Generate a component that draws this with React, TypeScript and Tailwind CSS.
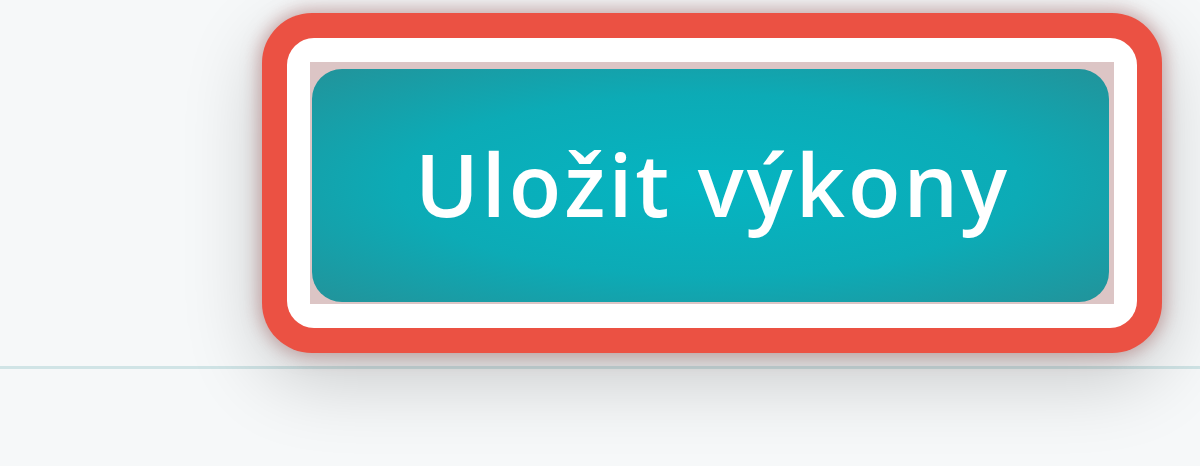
export default function App() {
  return (
    <div className="h-[466px] w-[1200px] overflow-hidden bg-[#f6f8f9] font-['Open_Sans',sans-serif]">
      {/* Toolbar strip with highlighted save button */}
      <div className="h-[369px] border-b-[3px] border-[#d0e4e6] pl-[262px] pt-[13px]">
        <div className="flex h-[340px] w-[900px] rounded-[50px] bg-[#eb5143] p-[25px] shadow-[0_0_16px_4px_rgba(175,120,120,0.55),0_24px_80px_rgba(0,0,0,0.2)]">
          <div className="flex flex-1 rounded-[27px] bg-white px-[23px] py-[24px]">
            <div className="flex flex-1 bg-[#dcc5c5] pb-[2px] pl-[2px] pr-[5px] pt-[7px]">
              <button className="flex flex-1 items-center justify-center rounded-[30px] bg-[radial-gradient(ellipse_at_center,#05b5c2_0%,#0cabb6_55%,#22939a_100%)] pb-[4px] pl-[4px] text-[86px] font-semibold leading-none tracking-[3px] text-white">
                Uložit výkony
              </button>
            </div>
          </div>
        </div>
      </div>
    </div>
  );
}
